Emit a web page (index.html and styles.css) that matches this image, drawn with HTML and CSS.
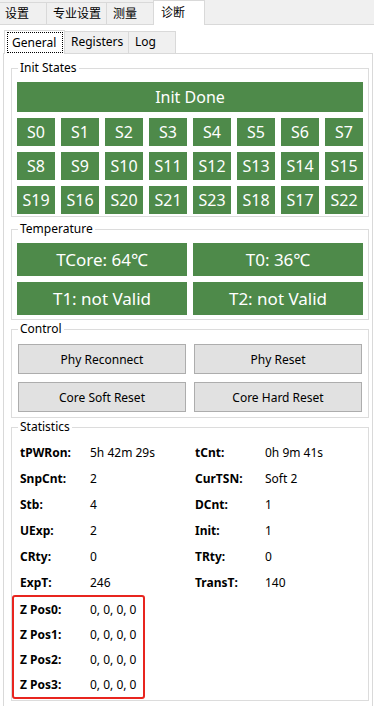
FILE: index.html
```html
<!DOCTYPE html>
<html lang="zh-CN">
<head>
<meta charset="UTF-8">
<title>诊断 – General</title>
<meta name="viewport" content="width=device-width, initial-scale=1.0">
<link rel="stylesheet" href="styles.css">
</head>
<body>
 <div class="tabbar">
  <div class="tab t1">设置</div>
  <div class="tab t2">专业设置</div>
  <div class="tab t3">测量</div>
  <div class="tab active">诊断</div>
 </div>

 <div class="page">
  <div class="subtabs">
   <div class="subtab active"><span class="focus">General</span></div>
   <div class="subtab st2">Registers</div>
   <div class="subtab st3">Log</div>
  </div>

  <div class="panel">
   <fieldset class="group init">
    <legend>Init States</legend>
    <div class="block initdone">Init Done</div>
    <div class="sgrid">
     <div class="block">S0</div><div class="block">S1</div><div class="block">S2</div><div class="block">S3</div>
     <div class="block">S4</div><div class="block">S5</div><div class="block">S6</div><div class="block">S7</div>
     <div class="block">S8</div><div class="block">S9</div><div class="block">S10</div><div class="block">S11</div>
     <div class="block">S12</div><div class="block">S13</div><div class="block">S14</div><div class="block">S15</div>
     <div class="block">S19</div><div class="block">S16</div><div class="block">S20</div><div class="block">S21</div>
     <div class="block">S23</div><div class="block">S18</div><div class="block">S17</div><div class="block">S22</div>
    </div>
   </fieldset>

   <fieldset class="group temp">
    <legend>Temperature</legend>
    <div class="tgrid">
     <div class="block">TCore: 64℃</div>
     <div class="block">T0: 36℃</div>
     <div class="block">T1: not Valid</div>
     <div class="block">T2: not Valid</div>
    </div>
   </fieldset>

   <fieldset class="group control">
    <legend>Control</legend>
    <div class="bgrid">
     <button>Phy Reconnect</button>
     <button>Phy Reset</button>
     <button>Core Soft Reset</button>
     <button>Core Hard Reset</button>
    </div>
   </fieldset>

   <fieldset class="group stats">
    <legend>Statistics</legend>
    <div class="kv">
     <b>tPWRon:</b><span>5h 42m 29s</span><b>tCnt:</b><span>0h 9m 41s</span>
     <b>SnpCnt:</b><span>2</span><b>CurTSN:</b><span>Soft 2</span>
     <b>Stb:</b><span>4</span><b>DCnt:</b><span>1</span>
     <b>UExp:</b><span>2</span><b>Init:</b><span>1</span>
     <b>CRty:</b><span>0</span><b>TRty:</b><span>0</span>
     <b>ExpT:</b><span>246</span><b>TransT:</b><span>140</span>
    </div>
    <div class="kv zpos">
     <b>Z Pos0:</b><span>0, 0, 0, 0</span>
     <b>Z Pos1:</b><span>0, 0, 0, 0</span>
     <b>Z Pos2:</b><span>0, 0, 0, 0</span>
     <b>Z Pos3:</b><span>0, 0, 0, 0</span>
    </div>
   </fieldset>
  </div>
 </div>
</body>
</html>
```

FILE: styles.css
```css
html,body{margin:0;background:#fff}
body{width:374px;height:706px;overflow:hidden;font-family:"Noto Sans","Noto Sans CJK SC",sans-serif;font-size:12px;color:#000}

/* outer tabs */
.tabbar{display:flex;align-items:flex-end;height:25px;box-sizing:border-box;background:#f0f0f0;border-bottom:1px solid #d9d9d9}
.tab{box-sizing:border-box;height:22px;border-top:1px solid #d9d9d9;border-right:1px solid #d9d9d9;line-height:20px;font-family:"Noto Sans CJK SC",sans-serif}
.t1{width:47px;padding-left:5px}
.t2{width:60px;padding-left:6px}
.t3{width:47px;padding-left:6px}
.tab.active{width:52px;height:25px;margin:0 0 -1px -1px;padding:1px 0 0 7px;background:#fff;border-left:1px solid #d9d9d9}

/* inner tabs */
.page{padding-top:5px}
.subtabs{display:flex;align-items:flex-end;height:23px;padding-left:4px}
.subtab{box-sizing:border-box;height:22px;border-top:1px solid #d9d9d9;border-right:1px solid #d9d9d9;background:#f0f0f0;line-height:20px}
.subtab.active{width:61px;height:24px;margin-bottom:-1px;padding:1px 1px 0 2px;background:#fff;border-left:1px solid #d9d9d9;position:relative}
.focus{display:block;height:21px;box-sizing:border-box;border:1px dotted #000;padding-left:4px;line-height:19px}
.st2{width:64px;padding-left:6px}
.st3{width:47px;padding-left:6px}

.panel{margin-left:3px;width:370px;min-height:680px;box-sizing:border-box;border:1px solid #d9d9d9;border-bottom:none;padding:0 3px 0 7px}

/* group boxes */
.group{margin:1px 0 0;border:1px solid #dcdcdc;padding:6px 5px 2px;min-width:0}
.group legend{margin-left:1px;padding:0 2px;line-height:16px;font-size:12px}
.init{margin-top:6px}
.temp{margin-top:4px;padding-bottom:4px}
.control{padding-top:7px;padding-bottom:5px}
.stats{padding:4px 0 1px}
.stats legend{margin-left:6px}

.block{background:#4e8a4a;color:#fff;text-align:center;font-size:16px;line-height:28px;white-space:nowrap}
.initdone{line-height:30px;margin-bottom:6px}
.sgrid{display:grid;grid-template-columns:repeat(8,38px);grid-auto-rows:28px;gap:6px}
.tgrid{display:grid;grid-template-columns:170px 170px;grid-auto-rows:33px;gap:6px}
.tgrid .block{font-size:17px;line-height:33px}

.bgrid{display:grid;grid-template-columns:168px 168px;grid-auto-rows:30px;gap:8px;margin:0 1px}
button{font:inherit;color:#000;background:#e1e1e1;border:1px solid #adadad;padding:0;margin:0}

.kv{display:grid;grid-template-columns:70px 105px 70px 1fr;grid-auto-rows:26px;align-items:center;padding-left:8px}
.kv b{font-weight:bold}
.zpos{width:133px;box-sizing:border-box;grid-template-columns:70px 1fr;grid-auto-rows:25px;padding-left:6px;border:2px solid #e8251f;border-radius:3px}
```
